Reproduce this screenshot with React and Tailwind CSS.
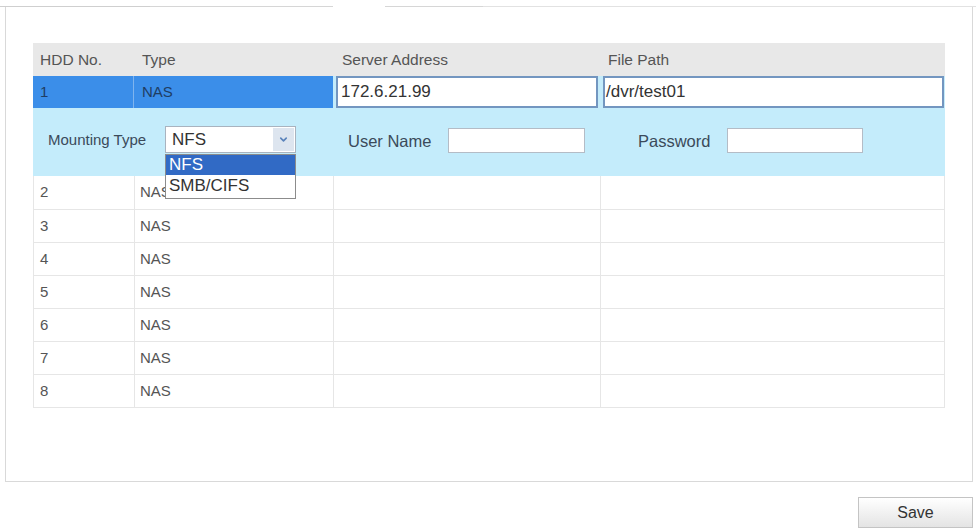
import { ChevronDown } from 'lucide-react';

const rows = [2, 3, 4, 5, 6, 7, 8];

export default function App() {
  return (
    <div className="w-[976px] h-[531px] bg-white font-['Liberation_Sans',Arial,sans-serif] text-[#555]">
      {/* tab strip bottom edges */}
      <div className="flex h-[7px]">
        <div className="w-[150px] border-b border-[#cfcfcf]" />
        <div className="w-[183px] border-b border-[#d6d6d6]" />
        <div className="w-[52px]" />
        <div className="w-[98px] border-b border-[#d6d6d6]" />
        <div className="flex-1 border-b border-[#e2e2e2]" />
      </div>

      <div className="ml-[5px] w-[968px] h-[475px] border-l border-r border-b border-[#d9d9d9] pt-[36px] pl-[27px]">
        <div className="w-[912px] border-b border-[#e6e6e6]">
          {/* header */}
          <div className="flex h-[33px] bg-[#e8e8e8] text-[15.5px] text-[#555] items-center">
            <div className="w-[100px] pl-[7px]">HDD No.</div>
            <div className="w-[200px] pl-[9px]">Type</div>
            <div className="w-[267px] pl-[9px]">Server Address</div>
            <div className="flex-1 pl-[8px]">File Path</div>
          </div>

          {/* selected row */}
          <div className="flex h-[32px] text-[15px]">
            <div className="w-[100px] bg-[#3b8ee9] text-[#1f3d63] pl-[7px] flex items-center">1</div>
            <div className="w-[200px] bg-[#3b8ee9] text-[#1f3d63] pl-[8px] flex items-center border-l border-[#7fb4ee]">NAS</div>
            <div className="w-[267px] bg-[#c4ecfb] pl-[3px] pr-[2px]">
              <div className="h-[32px] bg-white border-2 border-[#7396c0] flex items-center px-[3px] text-[17px] text-[#333]">172.6.21.99</div>
            </div>
            <div className="flex-1 bg-[#c4ecfb] pl-[3px] pr-[1px]">
              <div className="h-[32px] bg-white border-2 border-[#7396c0] flex items-center px-[1px] text-[17px] text-[#333]">/dvr/test01</div>
            </div>
          </div>

          {/* expanded settings row */}
          <div className="flex h-[68px] bg-[#c4ecfb] text-[#3b4a5a] pt-[18px]">
            <div className="w-[132px] pl-[15px] pt-[3px] text-[15px]">Mounting Type</div>
            <div className="relative w-[131px] h-[27px]">
              <div className="h-[27px] bg-white border border-[#a9b3bf] flex items-center justify-between pl-[6px] pr-[1px]">
                <span className="text-[17px] text-[#333]">NFS</span>
                <span className="w-[21px] h-[23px] bg-[#dde5ef] flex items-center justify-center">
                  <ChevronDown size={11} strokeWidth={3.5} className="text-[#5a83bb]" />
                </span>
              </div>
              <div className="absolute left-0 top-[28px] w-[131px] bg-white border border-[#8c8c8c] text-[17px] z-10">
                <div className="h-[20px] leading-[20px] bg-[#316ac5] text-white pl-[3px]">NFS</div>
                <div className="h-[23px] leading-[22px] text-[#333] pl-[3px]">SMB/CIFS</div>
              </div>
            </div>
            <div className="w-[52px]" />
            <div className="w-[100px] pt-[3px] text-[16.5px]">User Name</div>
            <div className="w-[137px] h-[25px] mt-[2px] bg-white border border-[#b4bcc6]" />
            <div className="w-[53px]" />
            <div className="w-[89px] pt-[3px] text-[16.5px]">Password</div>
            <div className="w-[136px] h-[25px] mt-[2px] bg-white border border-[#b4bcc6]" />
          </div>

          {/* remaining rows */}
          {rows.map((n) => (
            <div key={n} className="flex h-[33px] text-[15px] text-[#555] border-l border-r border-[#e6e6e6]">
              <div className={`w-[101px] pl-[6px] flex items-center border-r border-[#e6e6e6] ${n > 2 ? 'border-t' : ''}`}>{n}</div>
              <div className={`w-[199px] pl-[5px] flex items-center border-r border-[#e6e6e6] ${n > 2 ? 'border-t' : ''}`}>NAS</div>
              <div className={`w-[267px] border-r border-[#e6e6e6] ${n > 2 ? 'border-t' : ''}`} />
              <div className={`flex-1 border-[#e6e6e6] ${n > 2 ? 'border-t' : ''}`} />
            </div>
          ))}
        </div>
      </div>

      <div className="flex justify-end pr-[3px] pt-[15px]">
        <button className="w-[115px] h-[31px] border border-[#c4c4c4] bg-gradient-to-b from-white to-[#e4e4e4] text-[16px] text-[#333]">
          Save
        </button>
      </div>
    </div>
  );
}
